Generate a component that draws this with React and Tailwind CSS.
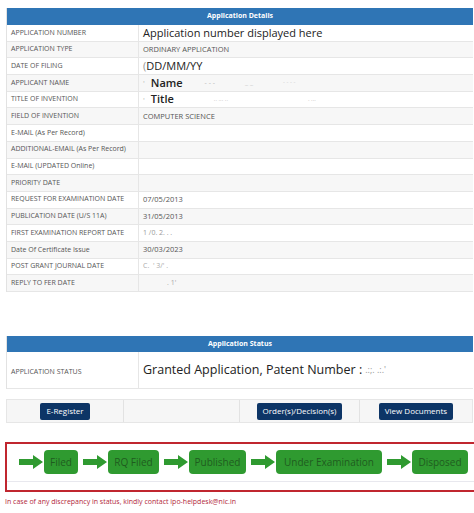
import React from "react";

const rows = [
  ["APPLICATION NUMBER", "Application number displayed here", "big"],
  ["APPLICATION TYPE", "ORDINARY APPLICATION"],
  ["DATE OF FILING", "(DD/MM/YY", "big"],
  ["APPLICANT NAME", "name", "name"],
  ["TITLE OF INVENTION", "title", "title"],
  ["FIELD OF INVENTION", "COMPUTER SCIENCE"],
  ["E-MAIL (As Per Record)", ""],
  ["ADDITIONAL-EMAIL (As Per Record)", ""],
  ["E-MAIL (UPDATED Online)", ""],
  ["PRIORITY DATE", ""],
  ["REQUEST FOR EXAMINATION DATE", "07/05/2013"],
  ["PUBLICATION DATE (U/S 11A)", "31/05/2013"],
  ["FIRST EXAMINATION REPORT DATE", "faint1"],
  ["Date Of Certificate Issue", "30/03/2023"],
  ["POST GRANT JOURNAL DATE", "faint2"],
  ["REPLY TO FER DATE", "faint3"],
];

const steps = [
  ["Filed", "w-[34px]"],
  ["RQ Filed", "w-[51px]"],
  ["Published", "w-[57px]"],
  ["Under Examination", "w-[106px]"],
  ["Disposed", "w-[56px]"],
];

function Arrow() {
  return (
    <svg width="24" height="14" viewBox="0 0 24 14" className="shrink-0">
      <path d="M0 4h14V0l10 7-10 7v-4H0z" fill="#2f9a30" />
    </svg>
  );
}

function Value({ v, kind }) {
  if (kind === "big")
    return (
      <span className="text-[11px] text-[#222]">
        {v.startsWith("(") ? (
          <>
            <span className="text-[#999]">(</span>
            {v.slice(1)}
          </>
        ) : (
          v
        )}
      </span>
    );
  if (kind === "name")
    return (
      <div className="flex items-center w-full">
        <span className="text-[#bbb] text-[8px] mr-[6px]">'</span>
        <span className="text-[11px] text-[#222] font-semibold">Name</span>
        <span className="ml-[22px] text-[7px] text-[#bbb]">- - -</span>
        <span className="ml-[30px] text-[7px] text-[#ccc]">_ _</span>
        <span className="ml-[30px] text-[6px] text-[#ccc]">- - - -</span>
      </div>
    );
  if (kind === "title")
    return (
      <div className="flex items-center w-full">
        <span className="text-[#bbb] text-[8px] mr-[6px]">'</span>
        <span className="text-[11px] text-[#222] font-semibold">Title</span>
        <span className="ml-[40px] text-[6px] text-[#bbb]">.. ... ..</span>
        <span className="ml-[80px] text-[6px] text-[#bbb]">. ...</span>
      </div>
    );
  if (v === "faint1") return <span className="text-[7px] text-[#999]">1 /0. 2. . .</span>;
  if (v === "faint2") return <span className="text-[7px] text-[#aaa]">C. &nbsp;' 3/' .</span>;
  if (v === "faint3") return <span className="text-[7px] text-[#aaa] ml-[24px]">. 1'</span>;
  return <span className="text-[7.5px] text-[#555]">{v}</span>;
}

export default function App() {
  return (
    <div
      className="w-[474px] h-[513px] bg-white overflow-hidden relative"
      style={{ fontFamily: '"Open Sans", "Noto Sans", sans-serif' }}
    >
      <div className="pt-[8px] pl-[6px] w-[473px]">
        {/* details */}
        <div className="border-l border-[#e2e2e2]">
          <div className="h-[17px] bg-[#2f75b5] flex items-center justify-center text-white text-[7px] font-bold">
            Application Details
          </div>
          {rows.map(([label, v, kind], i) => (
            <div
              key={label}
              className={`h-[16.7px] flex border-b border-[#e6e6e6] ${i % 2 === 1 ? "bg-[#f7f7f7]" : "bg-white"}`}
            >
              <div className="w-[132px] shrink-0 border-r border-[#e6e6e6] flex items-center pl-[4px] text-[7px] text-[#555] whitespace-nowrap">
                {label}
              </div>
              <div className="flex-1 flex items-center pl-[4px] whitespace-nowrap overflow-hidden">
                <Value v={v} kind={kind} />
              </div>
            </div>
          ))}
        </div>

        {/* status */}
        <div className="mt-[44px] border-l border-[#e2e2e2]">
          <div className="h-[16px] bg-[#2f75b5] flex items-center justify-center text-white text-[7px] font-bold">
            Application Status
          </div>
          <div className="h-[37px] flex border-b border-[#e6e6e6] bg-white">
            <div className="w-[132px] shrink-0 border-r border-[#e6e6e6] flex items-center pl-[4px] text-[7px] text-[#555] pt-[4px]">
              APPLICATION STATUS
            </div>
            <div className="flex-1 flex items-center pl-[4px] whitespace-nowrap text-[12.5px] text-[#222]">
              Granted Application, Patent Number :
              <span className="ml-[3px] text-[9px] text-[#999]">.:;.&nbsp;.:.'</span>
            </div>
          </div>
        </div>

        {/* buttons */}
        <div className="mt-[10px] h-[24px] flex bg-[#f6f6f6] border border-[#e6e6e6]">
          <div className="w-[117px] border-r border-[#e2e2e2] flex items-center justify-center">
            <div className="h-[17px] px-[6px] bg-[#0d3566] rounded-[2px] text-white text-[8px] flex items-center">
              E-Register
            </div>
          </div>
          <div className="w-[116px] border-r border-[#e2e2e2]" />
          <div className="w-[120px] border-r border-[#e2e2e2] flex items-center justify-center">
            <div className="h-[17px] px-[6px] bg-[#0d3566] rounded-[2px] text-white text-[8px] flex items-center">
              Order(s)/Decision(s)
            </div>
          </div>
          <div className="flex-1 flex items-center justify-center">
            <div className="h-[17px] px-[6px] bg-[#0d3566] rounded-[2px] text-white text-[8px] flex items-center">
              View Documents
            </div>
          </div>
        </div>
      </div>

      {/* progress */}
      <div className="mt-[19px] ml-[5px] w-[480px] h-[50px] border-2 border-[#c0262f] pt-[6px]">
        <div className="h-[32px] border-b border-[#e8e8ee] flex items-start pl-[12px]">
          {steps.map(([s, w], i) => (
            <div key={s} className="flex items-center">
              <div className={i === 0 ? "" : "ml-[5px]"}>
                <Arrow />
              </div>
              <div
                className={`${w} ml-[1px] h-[24px] bg-[#2f9a30] rounded-[4px] flex items-center justify-center whitespace-nowrap text-[10px] text-[#1f5c1f]`}
              >
                {s}
              </div>
            </div>
          ))}
        </div>
      </div>
      <div className="ml-[5px] mt-[5px] text-[7px] text-[#b2283a] whitespace-nowrap">
        In case of any discrepancy in status, kindly contact ipo-helpdesk@nic.in
      </div>
    </div>
  );
}
